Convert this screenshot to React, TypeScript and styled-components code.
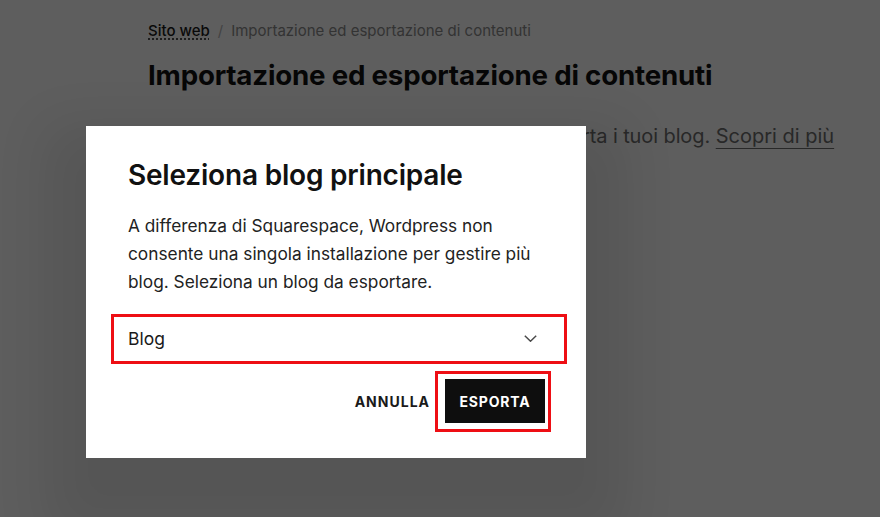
import React from 'react'
import styled, { createGlobalStyle } from 'styled-components'

const GlobalStyle = createGlobalStyle`
  html, body {
    margin: 0;
    padding: 0;
    background: #ffffff;
  }
  body {
    font-family: Inter, "Noto Sans", "Liberation Sans", sans-serif;
    -webkit-font-smoothing: antialiased;
  }
`

const Page = styled.div`
  width: 880px;
  height: 517px;
  overflow: hidden;
  position: relative;
  box-sizing: border-box;
  padding: 21px 0 0 148px;
`

const Crumbs = styled.nav`
  display: flex;
  align-items: center;
  gap: 8px;
  font-size: 15px;
  color: #8c8c8c;
`

const CrumbLink = styled.a`
  color: #1a1a1a;
  font-weight: 500;
  text-decoration: underline;
  text-decoration-style: dotted;
  text-underline-offset: 3px;
`

const Slash = styled.span`
  color: #b5b5b5;
`

const PageTitle = styled.h1`
  margin: 18px 0 0;
  font-size: 27.7px;
  font-weight: 650;
  letter-spacing: -0.2px;
  color: #111;
`

const Intro = styled.p`
  margin: 33px 0 0;
  font-size: 20px;
  line-height: 22px;
  color: #6e6e6e;
  white-space: nowrap;
`

const IntroLead = styled.span`
  letter-spacing: -0.1px;
`

const IntroLink = styled.a`
  color: #6e6e6e;
  text-decoration: underline;
  text-underline-offset: 5px;
  text-decoration-thickness: 1px;
`

const Overlay = styled.div`
  position: absolute;
  inset: 0;
  background: rgba(0, 0, 0, 0.63);
  display: flex;
  align-items: flex-start;
  padding: 126px 0 0 86px;
`

const Dialog = styled.div`
  width: 500px;
  box-sizing: border-box;
  background: #fff;
  padding: 32px 42px 26px;
  box-shadow: 0 40px 50px 40px rgba(0, 0, 0, 0.09);
`

const DialogTitle = styled.h2`
  margin: 0;
  font-size: 28px;
  line-height: 34px;
  font-weight: 600;
  letter-spacing: -0.2px;
  color: #111;
`

const DialogText = styled.p`
  margin: 20px 0 0;
  font-size: 17.3px;
  line-height: 28px;
  color: #222;
`

const Marked = styled.div<{ $pad: string; $margin?: string }>`
  border: 3px solid #ee0e14;
  padding: ${({ $pad }) => $pad};
  margin: ${({ $margin }) => $margin || '0'};
`

const SelectField = styled.div`
  height: 42px;
  display: flex;
  align-items: center;
  justify-content: space-between;
  padding: 0 27px 2px 14px;
  font-size: 17.5px;
  color: #1a1a1a;
`

const Actions = styled.div`
  display: flex;
  justify-content: flex-end;
  align-items: center;
  gap: 3px;
  margin: 7px -7px 0 0;
`

const TextButton = styled.button`
  border: 0;
  background: none;
  font-family: inherit;
  font-size: 14px;
  font-weight: 700;
  letter-spacing: 1px;
  color: #1a1a1a;
  padding: 0 2px;
  height: 44px;
`

const SolidButton = styled.button`
  border: 0;
  background: #0e0e0e;
  color: #fff;
  font-family: inherit;
  font-size: 14px;
  font-weight: 700;
  letter-spacing: 0.8px;
  width: 100px;
  height: 44px;
`

const Chevron = () => (
  <svg width="13" height="7" viewBox="0 0 13 7" fill="none">
    <path d="M0.8 0.8l5.7 5.4 5.7-5.4" stroke="#4a4a4a" strokeWidth="1.5" />
  </svg>
)

export default function App() {
  return (
    <>
      <GlobalStyle />
      <Page>
        <Crumbs>
          <CrumbLink>Sito web</CrumbLink>
          <Slash>/</Slash>
          <span>Importazione ed esportazione di contenuti</span>
        </Crumbs>
        <PageTitle>Importazione ed esportazione di contenuti</PageTitle>
        <Intro>
          <IntroLead>Importa contenuti da altre piattaforme ed esporta i tuoi blog.</IntroLead>{' '}
          <IntroLink>Scopri di più</IntroLink>
        </Intro>
        <Overlay>
          <Dialog>
            <DialogTitle>Seleziona blog principale</DialogTitle>
            <DialogText>
              A differenza di Squarespace, Wordpress non consente una singola
              installazione per gestire più blog. Seleziona un blog da esportare.
            </DialogText>
            <Marked $pad="0" $margin="18px -23px 0 -17px">
              <SelectField>
                <span>Blog</span>
                <Chevron />
              </SelectField>
            </Marked>
            <Actions>
              <TextButton>ANNULLA</TextButton>
              <Marked $pad="5px 3px 6px 7px">
                <SolidButton>ESPORTA</SolidButton>
              </Marked>
            </Actions>
          </Dialog>
        </Overlay>
      </Page>
    </>
  )
}
